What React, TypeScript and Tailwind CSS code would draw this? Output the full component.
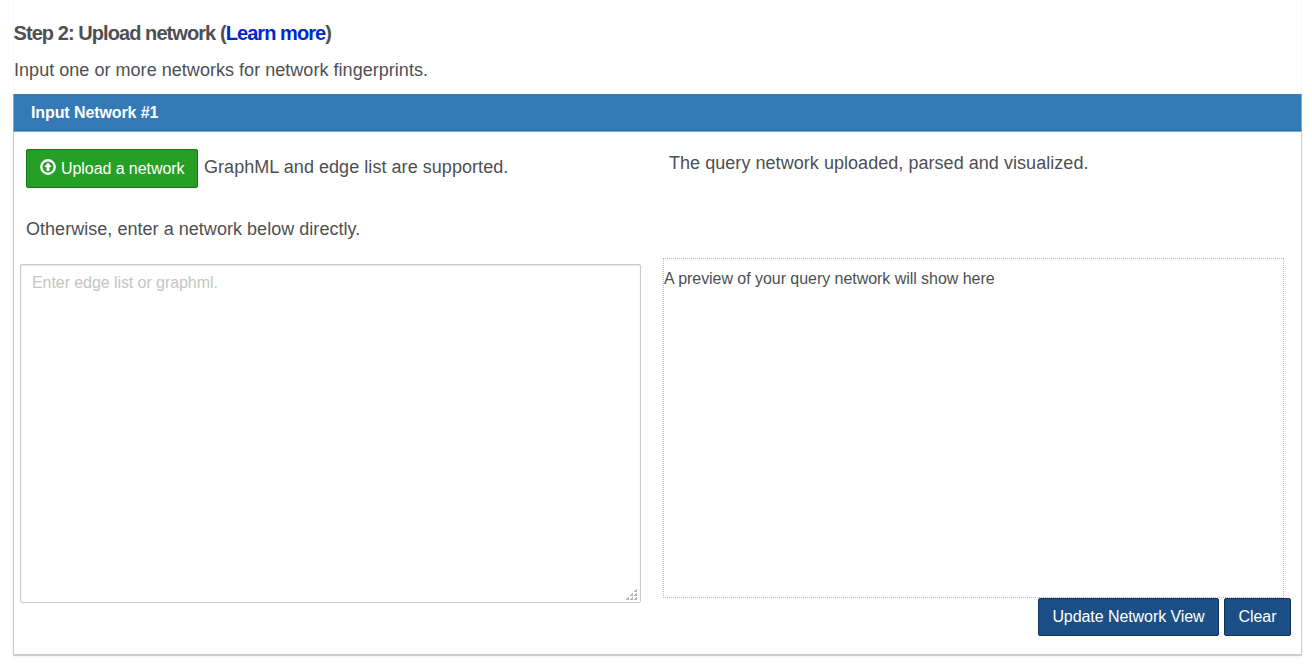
export default function App() {
  return (
    <main className="h-[669px] w-[1312px] overflow-hidden bg-white pl-[13px] font-['Liberation_Sans',Arial,sans-serif] text-[#4d4f53]">
      <div className="h-[94px] w-[1289px] border-x border-[#fafafa] pt-[20px]">
        <h1 className="-ml-[0.5px] h-[26px] text-[20px] font-bold leading-[26px] tracking-[-0.93px]">
          Step 2: Upload network (<a href="#" className="text-[#0029cc]">Learn more</a>)
        </h1>
        <p className="mt-[11px] h-[26px] text-[18px] leading-[26px] tracking-[0.035px]">Input one or more networks for network fingerprints.</p>
      </div>
      <section className="h-[562px] w-[1289px] border border-b-2 border-[#ccc] border-t-0 shadow-[0_1px_3px_rgba(0,0,0,0.06)]">
        <header className="-mx-px h-[38px] border border-t-0 border-[#68b3e5] bg-[#337ab7] pl-[17px] text-[16px] font-bold leading-[37px] tracking-[-0.1px] text-white shadow-[inset_0_-1px_0_#2c6fab]">Input Network #1</header>
        <div className="flex">
          <div className="w-[643px] pl-[6px] pt-[17px]">
            <div className="flex pl-[6px]">
              <button className="flex h-[39px] w-[172px] items-center rounded-[2px] border border-[#177519] bg-[#259f26] pl-[13px] text-[16px] tracking-[-0.07px] text-white">
                <svg className="mb-[3px] mr-[5px]" width="16" height="16" viewBox="0 0 16 16" fill="none"><circle cx="8" cy="8" r="6.7" stroke="white" strokeWidth="2.4" /><path d="M8 3.6L11.7 8H9.5V12H6.5V8H4.3Z" fill="white" /></svg>
                Upload a network
              </button>
              <span className="ml-[6px] text-[18px] leading-[36px] tracking-[0.05px]">GraphML and edge list are supported.</span>
            </div>
            <p className="mt-[28px] h-[26px] pl-[6px] text-[18px] leading-[26px] tracking-[0.035px]">Otherwise, enter a network below directly.</p>
            <div className="relative mt-[22px] h-[339px] w-[621px]">
              <textarea placeholder="Enter edge list or graphml." className="block h-full w-full resize-none rounded-[2px] border border-[#c8c8c8] px-[11px] py-[5px] text-[16px] leading-[26px] tracking-[-0.07px] shadow-[inset_0_1px_2px_rgba(0,0,0,0.08)] placeholder:text-[#c4c4c4]" />
              <svg className="pointer-events-none absolute bottom-[3px] right-[4px]" width="11" height="11" viewBox="0 0 11 11" fill="#b4b4b4"><path d="M8 0h3v3H8zM4 4h3v3H4zM8 4h3v3H8zM0 8h3v3H0zM4 8h3v3H4zM8 8h3v3H8z" /><path fill="white" d="M8 0h2v1H9v1H8zM4 4h2v1H5v1H4zM8 4h2v1H9v1H8zM0 8h2v1H1v1H0zM4 8h2v1H5v1H4zM8 8h2v1H9v1H8z" /></svg>
            </div>
          </div>
          <div className="w-[643px] pl-[6px] pt-[18px]">
            <p className="h-[26px] pl-[6px] text-[18px] leading-[26px] tracking-[0.045px]">The query network uploaded, parsed and visualized.</p>
            <div className="mt-[82px] h-[340px] w-[621px] border border-dotted border-[#bbb] pt-[7px] text-[16px] leading-[26px] tracking-[-0.045px]">A preview of your query network will show here</div>
            <div className="flex justify-end gap-[5px] pr-[9px]">
              <button className="h-[38px] w-[181px] rounded-[2px] border border-[#103456] bg-[#1b4f85] text-[16px] tracking-[-0.07px] text-white">Update Network View</button>
              <button className="h-[38px] w-[67px] rounded-[2px] border border-[#103456] bg-[#1b4f85] text-[16px] tracking-[-0.07px] text-white">Clear</button>
            </div>
          </div>
        </div>
      </section>
    </main>
  );
}
